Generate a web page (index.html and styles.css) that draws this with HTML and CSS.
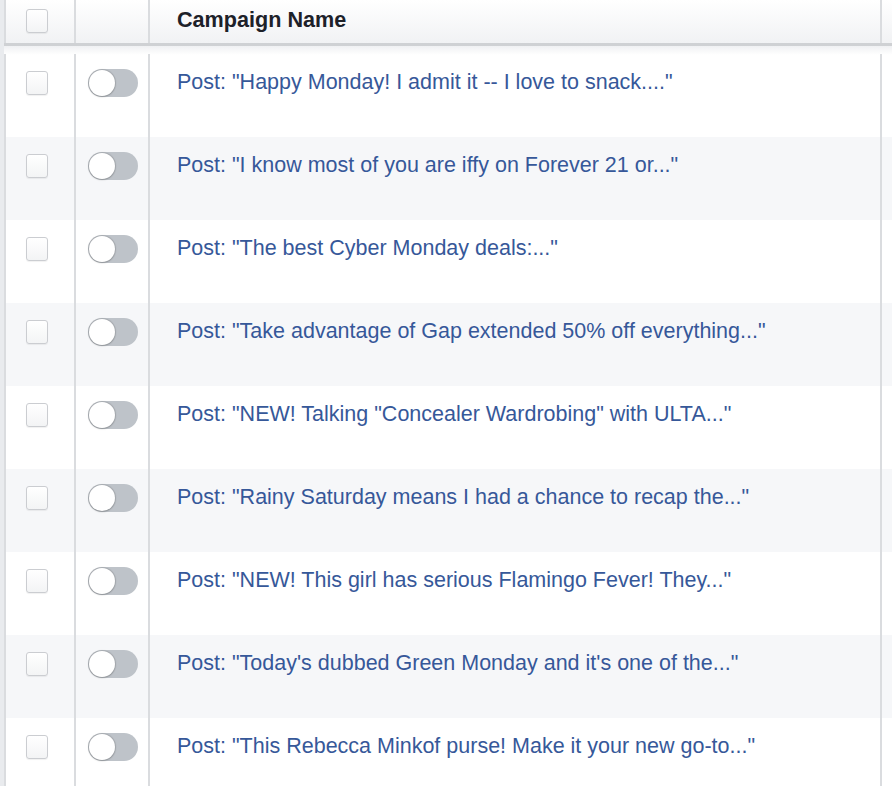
FILE: index.html
```html
<!DOCTYPE html>
<html>
<head>
<meta charset="utf-8">
<link rel="stylesheet" href="styles.css">
</head>
<body>
<div class="table">
  <div class="row head">
    <div class="cell c1"><span class="check"></span></div>
    <div class="cell c2"></div>
    <div class="cell c3"><span class="title">Campaign Name</span></div>
    <div class="cell c4"></div>
  </div>
  <div class="row first">
    <div class="cell c1"><span class="check"></span></div>
    <div class="cell c2"><span class="toggle"><span class="knob"></span></span></div>
    <div class="cell c3"><a class="link">Post: "Happy Monday! I admit it -- I love to snack...."</a></div>
    <div class="cell c4"></div>
  </div>
  <div class="row alt">
    <div class="cell c1"><span class="check"></span></div>
    <div class="cell c2"><span class="toggle"><span class="knob"></span></span></div>
    <div class="cell c3"><a class="link">Post: "I know most of you are iffy on Forever 21 or..."</a></div>
    <div class="cell c4"></div>
  </div>
  <div class="row">
    <div class="cell c1"><span class="check"></span></div>
    <div class="cell c2"><span class="toggle"><span class="knob"></span></span></div>
    <div class="cell c3"><a class="link">Post: "The best Cyber Monday deals:..."</a></div>
    <div class="cell c4"></div>
  </div>
  <div class="row alt">
    <div class="cell c1"><span class="check"></span></div>
    <div class="cell c2"><span class="toggle"><span class="knob"></span></span></div>
    <div class="cell c3"><a class="link">Post: "Take advantage of Gap extended 50% off everything..."</a></div>
    <div class="cell c4"></div>
  </div>
  <div class="row">
    <div class="cell c1"><span class="check"></span></div>
    <div class="cell c2"><span class="toggle"><span class="knob"></span></span></div>
    <div class="cell c3"><a class="link">Post: "NEW! Talking "Concealer Wardrobing" with ULTA..."</a></div>
    <div class="cell c4"></div>
  </div>
  <div class="row alt">
    <div class="cell c1"><span class="check"></span></div>
    <div class="cell c2"><span class="toggle"><span class="knob"></span></span></div>
    <div class="cell c3"><a class="link">Post: "Rainy Saturday means I had a chance to recap the..."</a></div>
    <div class="cell c4"></div>
  </div>
  <div class="row">
    <div class="cell c1"><span class="check"></span></div>
    <div class="cell c2"><span class="toggle"><span class="knob"></span></span></div>
    <div class="cell c3"><a class="link">Post: "NEW! This girl has serious Flamingo Fever! They..."</a></div>
    <div class="cell c4"></div>
  </div>
  <div class="row alt">
    <div class="cell c1"><span class="check"></span></div>
    <div class="cell c2"><span class="toggle"><span class="knob"></span></span></div>
    <div class="cell c3"><a class="link">Post: "Today's dubbed Green Monday and it's one of the..."</a></div>
    <div class="cell c4"></div>
  </div>
  <div class="row">
    <div class="cell c1"><span class="check"></span></div>
    <div class="cell c2"><span class="toggle"><span class="knob"></span></span></div>
    <div class="cell c3"><a class="link">Post: "This Rebecca Minkof purse! Make it your new go-to..."</a></div>
    <div class="cell c4"></div>
  </div>
</div>
</body>
</html>
```

FILE: styles.css
```css
html, body {
  margin: 0;
  padding: 0;
  background: #fff;
  height: 100%;
  overflow: hidden;
}
body {
  font-family: "Liberation Sans", Arial, Helvetica, sans-serif;
}
.table {
  border-left: 4px solid #e9ebee;
  min-height: 100%;
  box-sizing: border-box;
}
.row {
  display: grid;
  grid-template-columns: 70px 74px 732px 1fr;
  height: 83px;
  background: #fff;
}
.row.alt {
  background: #f6f7f9;
}
.row.first {
  height: 91px;
  padding-top: 8px;
  box-sizing: border-box;
  background: linear-gradient(#f0f1f3 0px, #fff 9px);
}
.row.head {
  height: 46px;
  box-sizing: border-box;
  border-bottom: 3px solid #cfd1d4;
  background: linear-gradient(#ffffff, #f1f2f4);
}
.cell {
  border-left: 2px solid #dadcdf;
  position: relative;
}
.check {
  display: block;
  width: 20px;
  height: 22px;
  border: 1px solid #cbcdd1;
  border-radius: 3px;
  background: linear-gradient(#ffffff, #f3f4f5);
  box-shadow: 0 1px 1px rgba(0,0,0,0.06);
  margin: 17px 0 0 20px;
}
.head .check {
  margin-top: 9px;
}
.toggle {
  display: block;
  width: 50px;
  height: 28px;
  border-radius: 14px;
  background: #bec3c9;
  margin: 15px 0 0 12px;
  position: relative;
}
.knob {
  position: absolute;
  left: 1px;
  top: 1px;
  width: 26px;
  height: 26px;
  border-radius: 50%;
  background: #fff;
  box-shadow: 0 0 1px 1px rgba(0,0,0,0.12), 0 1px 2px rgba(0,0,0,0.15);
}
.title {
  display: block;
  padding: 7px 0 0 27px;
  font-weight: bold;
  font-size: 21.6px;
  line-height: 26px;
  color: #1d2129;
}
.link {
  display: block;
  padding: 15px 0 0 27px;
  font-size: 21.5px;
  line-height: 26px;
  color: #365899;
  white-space: nowrap;
}
```
